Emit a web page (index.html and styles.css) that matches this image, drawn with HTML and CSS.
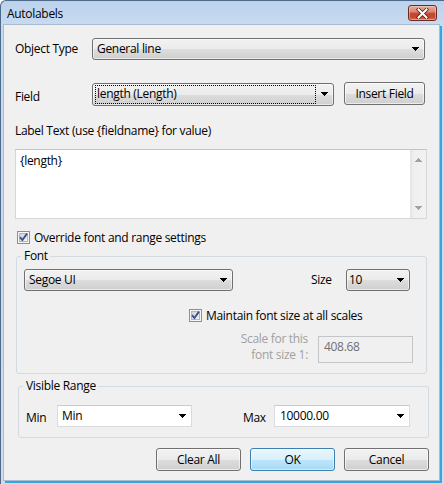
FILE: index.html
```html
<!DOCTYPE html>
<html>
<head>
<meta charset="utf-8">
<title>Autolabels</title>
<link rel="stylesheet" href="styles.css">
</head>
<body>
<div class="window">
  <div class="titlebar">
    <span class="title">Autolabels</span>
    <div class="close">
      <svg width="13" height="11" viewBox="0 0 13 11">
        <path d="M2.5 1.5L10.5 9.5M10.5 1.5L2.5 9.5" stroke="#5a1c12" stroke-width="3.6" stroke-linecap="square"/>
        <path d="M2.5 1.5L10.5 9.5M10.5 1.5L2.5 9.5" stroke="#fff" stroke-width="2" stroke-linecap="square"/>
      </svg>
    </div>
  </div>

  <div class="client">
    <div class="row row-type">
      <span class="lbl lbl-wide">Object Type</span>
      <div class="combo combo-type"><span class="combo-text">General line</span><svg class="arrow" width="7" height="4" viewBox="0 0 7 4"><path d="M0 0H7V1H6V2H5V3H4V4H3V3H2V2H1V1H0Z"/></svg></div>
    </div>

    <div class="row row-field">
      <span class="lbl lbl-wide lbl-field">Field</span>
      <div class="combo combo-field"><span class="focus-rect">length (Length)</span><svg class="arrow" width="7" height="4" viewBox="0 0 7 4"><path d="M0 0H7V1H6V2H5V3H4V4H3V3H2V2H1V1H0Z"/></svg></div>
      <div class="btn btn-insert">Insert Field</div>
    </div>

    <div class="caption">Label Text (use {fieldname} for value)</div>

    <div class="memo">
      <div class="memo-text">{length}</div>
      <div class="vscroll">
        <svg width="7" height="4" viewBox="0 0 7 4"><path d="M3 0H4V1H5V2H6V3H7V4H0V3H1V2H2V1H3Z"/></svg>
        <svg width="7" height="4" viewBox="0 0 7 4"><path d="M0 0H7V1H6V2H5V3H4V4H3V3H2V2H1V1H0Z"/></svg>
      </div>
    </div>

    <div class="check check-override">
      <svg class="box" width="13" height="13" viewBox="0 0 13 13">
        <defs>
          <linearGradient id="cbfill" x1="0" y1="0" x2="1" y2="1">
            <stop offset="0" stop-color="#cbcfd5"/>
            <stop offset="1" stop-color="#f7f7f7"/>
          </linearGradient>
        </defs>
        <rect x="0.5" y="0.5" width="12" height="12" fill="#f6f6f6" stroke="#8e8f8f"/>
        <rect x="2.5" y="2.5" width="8" height="8" fill="url(#cbfill)" stroke="#b3b8bf"/>
        <path d="M3 6.2L5.4 9L10 2.6" fill="none" stroke="#3b4f8c" stroke-width="1.8"/>
      </svg>
      <span>Override font and range settings</span>
    </div>

    <fieldset class="group group-font">
      <legend>Font</legend>
      <div class="row row-font">
        <div class="combo combo-font"><span class="combo-text">Segoe UI</span><svg class="arrow" width="7" height="4" viewBox="0 0 7 4"><path d="M0 0H7V1H6V2H5V3H4V4H3V3H2V2H1V1H0Z"/></svg></div>
        <span class="lbl lbl-size">Size</span>
        <div class="combo combo-size"><span class="combo-text">10</span><svg class="arrow" width="7" height="4" viewBox="0 0 7 4"><path d="M0 0H7V1H6V2H5V3H4V4H3V3H2V2H1V1H0Z"/></svg></div>
      </div>
      <div class="check check-maintain">
        <svg class="box" width="13" height="13" viewBox="0 0 13 13">
          <rect x="0.5" y="0.5" width="12" height="12" fill="#f6f6f6" stroke="#8e8f8f"/>
          <rect x="2.5" y="2.5" width="8" height="8" fill="url(#cbfill)" stroke="#b3b8bf"/>
          <path d="M3 6.2L5.4 9L10 2.6" fill="none" stroke="#3b4f8c" stroke-width="1.8"/>
        </svg>
        <span>Maintain font size at all scales</span>
      </div>
      <div class="row row-scale">
        <div class="scale-label">Scale for this<br>font size 1:</div>
        <div class="textbox disabled">408.68</div>
      </div>
    </fieldset>

    <fieldset class="group group-range">
      <legend>Visible Range</legend>
      <div class="row row-range">
        <span class="lbl lbl-range">Min</span>
        <div class="combo edit combo-min"><span class="combo-text">Min</span><svg class="arrow" width="7" height="4" viewBox="0 0 7 4"><path d="M0 0H7V1H6V2H5V3H4V4H3V3H2V2H1V1H0Z"/></svg></div>
        <span class="lbl lbl-range lbl-max">Max</span>
        <div class="combo edit combo-max"><span class="combo-text">10000.00</span><svg class="arrow" width="7" height="4" viewBox="0 0 7 4"><path d="M0 0H7V1H6V2H5V3H4V4H3V3H2V2H1V1H0Z"/></svg></div>
      </div>
    </fieldset>

    <div class="row row-buttons">
      <div class="btn btn-dialog">Clear All</div>
      <div class="btn btn-dialog btn-default">OK</div>
      <div class="btn btn-dialog">Cancel</div>
    </div>
  </div>
</div>
</body>
</html>
```

FILE: styles.css
```css
* { box-sizing: border-box; }

html, body {
  margin: 0;
  padding: 0;
}

body {
  width: 444px;
  height: 484px;
  overflow: hidden;
  background: #ffffff;
  font-family: "Open Sans", "Noto Sans", sans-serif;
  font-size: 12px;
  letter-spacing: -0.3px;
  color: #000;
}

/* window frame */
.window {
  width: 444px;
  height: 484px;
  display: flex;
  flex-direction: column;
  background: linear-gradient(#bcd2ec 0px, #c8daef 24px, #cddcee 100%);
  border-left: 1px solid #4d6a8a;
  border-top: 1px solid #4d6a8a;
  border-radius: 6px 0 0 0;
}

.titlebar {
  height: 23px;
  display: flex;
  align-items: flex-start;
  padding-left: 6px;
}

.title {
  line-height: 16px;
  margin-top: 5px;
}

.close {
  margin-left: auto;
  margin-right: 7px;
  margin-top: 4px;
  width: 29px;
  height: 16px;
  border: 1px solid #6b2a20;
  border-radius: 3px;
  background: linear-gradient(#e8ab9c 0%, #d78775 40%, #c5452f 55%, #c14a33 80%, #d9735a 100%);
  box-shadow: inset 0 0 0 1px rgba(255, 220, 210, 0.45);
  display: flex;
  align-items: center;
  justify-content: center;
}

.client {
  margin-left: 2px;
  width: 437px;
  height: 457px;
  background: #f0f0f0;
  border: 1px solid #a9bbd0;
  box-shadow: 2px 2px 0 0 #34a6e2;
  padding: 0 10px 0 11px;
  display: flex;
  flex-direction: column;
}

.row {
  display: flex;
  align-items: center;
}

.lbl {
  line-height: 16px;
  white-space: nowrap;
}

.lbl-wide { width: 77px; flex: none; }

/* comboboxes */
.combo {
  position: relative;
  display: flex;
  align-items: center;
  height: 22px;
  border: 1px solid #707070;
  border-radius: 3px;
  background: linear-gradient(#f2f2f2 0%, #ebebeb 50%, #dddddd 51%, #cfcfcf 100%);
  box-shadow: inset 0 0 0 1px rgba(255, 255, 255, 0.55);
  padding-left: 4px;
  flex: none;
}

.combo-text {
  line-height: 16px;
  white-space: nowrap;
}

.combo .arrow {
  position: absolute;
  right: 5px;
  top: 8px;
  fill: #000;
}

.combo.edit {
  background: #ffffff;
  border: 1px solid #dadbdf;
  border-top-color: #c9cbd0;
  border-radius: 0;
  box-shadow: none;
}

.row-type {
  margin-top: 13px;
  height: 22px;
}

.combo-type { width: 333px; }

.row-field {
  margin-top: 22px;
  height: 24px;
  align-items: flex-start;
}

.lbl-field { padding-top: 7px; }

.combo-field {
  margin-top: 1px;
  width: 242px;
  height: 23px;
  padding-left: 2px;
}

.focus-rect {
  width: 221px;
  height: 19px;
  border: 1px dotted #000;
  line-height: 16px;
  padding-left: 1px;
}

/* push buttons */
.btn {
  display: flex;
  align-items: center;
  justify-content: center;
  height: 23px;
  border: 1px solid #707070;
  border-radius: 3px;
  background: linear-gradient(#f2f2f2 0%, #ebebeb 50%, #dddddd 51%, #cfcfcf 100%);
  box-shadow: inset 0 0 0 1px rgba(255, 255, 255, 0.6);
  line-height: 16px;
  flex: none;
}

.btn-insert {
  margin-left: 10px;
  width: 81px;
}

.caption {
  margin-top: 17px;
  line-height: 16px;
}

/* multi-line text box */
.memo {
  margin-top: 10px;
  width: 412px;
  height: 70px;
  display: flex;
  background: #fff;
  border: 1px solid #d4d6da;
  border-top-color: #c2c4c8;
}

.memo-text {
  flex: 1;
  padding: 3px 0 0 4px;
  line-height: 16px;
}

.vscroll {
  width: 16px;
  background: linear-gradient(90deg, #e3e3e3 0px, #efefef 2px, #f2f2f2 100%);
  border-left: 1px solid #e6e6e6;
  display: flex;
  flex-direction: column;
  align-items: center;
  justify-content: space-between;
  padding: 8px 0 8px 0;
  fill: #a2a2a2;
}

/* check boxes */
.check {
  display: flex;
  align-items: center;
  height: 13px;
  line-height: 16px;
  white-space: nowrap;
}

.check .box {
  flex: none;
  margin-right: 4px;
}

.check-override {
  margin-top: 12px;
  margin-left: 2px;
}

/* group boxes */
.group {
  margin: 0;
  min-width: 0;
  border: 1px solid #d3dbe1;
  border-radius: 3px;
  width: 411px;
  padding: 0 7px;
}

.group legend {
  padding: 0 2px 0 3px;
  margin-left: -3px;
  line-height: 16px;
}

.group-font {
  margin-top: 4px;
  margin-left: 1px;
  padding-top: 5px;
  padding-bottom: 10px;
}

.row-font { height: 22px; }

.combo-font { width: 209px; }

.lbl-size {
  margin-left: 78px;
  width: 35px;
}

.combo-size {
  width: 64px;
  padding-left: 2px;
}

.check-maintain {
  margin-top: 18px;
  margin-left: 165px;
}

.row-scale {
  margin-top: 9px;
  align-items: flex-start;
}

.scale-label {
  width: 284px;
  text-align: right;
  line-height: 16px;
  color: #a0a0a0;
}

.textbox {
  margin-left: 10px;
  margin-top: 5px;
  width: 95px;
  height: 27px;
  border: 1px solid #c3c5c8;
  padding: 2px 0 0 5px;
  line-height: 16px;
}

.textbox.disabled {
  background: #f0f0f0;
  color: #707070;
}

.group-range {
  margin-top: 4px;
  margin-left: 3px;
  padding-top: 11px;
  padding-bottom: 10px;
}

.row-range { height: 22px; }

.lbl-range {
  width: 31px;
  flex: none;
  padding-top: 3px;
}

.combo-min { width: 135px; }

.lbl-max { margin-left: 51px; }

.combo-max { width: 136px; padding-left: 5px; }

.row-buttons {
  margin-top: 10px;
  justify-content: flex-end;
  gap: 9px;
}

.btn-dialog { width: 85px; }

.btn-default {
  border-color: #3c7fb1;
  background: linear-gradient(#eaf6fd 0%, #d9f0fc 50%, #bee6fd 51%, #a7d9f5 100%);
  box-shadow: inset 0 0 0 1px rgba(255, 255, 255, 0.5);
}
```
